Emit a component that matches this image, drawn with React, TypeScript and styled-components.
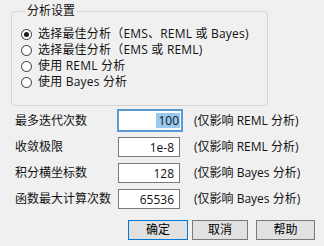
import React from "react";
import styled, { createGlobalStyle } from "styled-components";

const GlobalStyle = createGlobalStyle`
  html, body {
    margin: 0;
    padding: 0;
    background: #f0f0f0;
  }
  body {
    font-family: "Open Sans", "Noto Sans CJK SC", sans-serif;
    font-size: 12px;
    color: #111;
  }
`;

const Dialog = styled.div`
  width: 324px;
  height: 246px;
  box-sizing: border-box;
  padding: 3px 9px 0 11px;
  display: flex;
  flex-direction: column;
`;

const Group = styled.fieldset`
  margin: 0;
  width: 257px;
  box-sizing: border-box;
  border: 1px solid #d5d5d5;
  border-radius: 3px;
  padding: 7px 9px 15px 9px;
  display: flex;
  flex-direction: column;
`;

const Legend = styled.legend`
  padding: 0 2px;
  margin-left: 4px;
  line-height: 16px;
  height: 16px;
`;

const RadioRow = styled.label`
  display: flex;
  align-items: center;
  gap: 6px;
  height: 16px;
  flex: none;
  line-height: 16px;
  white-space: nowrap;
  letter-spacing: 0.2px;
`;

const RadioCircle = styled.span<{ $checked?: boolean }>`
  width: 11px;
  height: 11px;
  box-sizing: border-box;
  border: 1px solid #333;
  border-radius: 50%;
  background: #fff;
  display: flex;
  align-items: center;
  justify-content: center;
  flex: none;
  &::after {
    content: "";
    width: 5px;
    height: 5px;
    border-radius: 50%;
    background: ${(p) => (p.$checked ? "#1a1a1a" : "transparent")};
  }
`;

const Fields = styled.div`
  display: grid;
  grid-template-columns: 103px 62px auto;
  grid-auto-rows: 20px;
  row-gap: 6px;
  margin-top: 5px;
  margin-left: 4px;
  align-items: center;
`;

const FieldLabel = styled.span`
  line-height: 16px;
  white-space: nowrap;
`;

const TextBox = styled.div<{ $focused?: boolean }>`
  box-sizing: border-box;
  background: #fff;
  display: flex;
  align-items: center;
  justify-content: flex-end;
  line-height: 15px;
  border: ${(p) => (p.$focused ? "2px solid #5b9bd5" : "1px solid #7a7a7a")};
  width: ${(p) => (p.$focused ? "66px" : "62px")};
  height: ${(p) => (p.$focused ? "23px" : "20px")};
  margin-left: ${(p) => (p.$focused ? "-1px" : "0")};
  margin-top: ${(p) => (p.$focused ? "-1px" : "0")};
  padding-right: ${(p) => (p.$focused ? "1px" : "5px")};
`;

const Selected = styled.span`
  background: #99c9ef;
  padding: 0 1px 0 2px;
`;

const Note = styled.span`
  white-space: nowrap;
  line-height: 16px;
  margin-left: 14px;
`;

const ButtonBar = styled.div`
  display: flex;
  justify-content: flex-end;
  gap: 4px;
  margin-top: 11px;
`;

const Button = styled.button<{ $primary?: boolean; $w: number }>`
  font: inherit;
  color: #000;
  width: ${(p) => p.$w}px;
  height: 20px;
  padding: 0;
  background: #e1e1e1;
  border: 1px solid ${(p) => (p.$primary ? "#0078d7" : "#7a7a7a")};
  line-height: 16px;
  &:last-child {
    margin-left: 4px;
  }
`;

const options = [
  "选择最佳分析（EMS、REML 或 Bayes)",
  "选择最佳分析（EMS 或 REML)",
  "使用 REML 分析",
  "使用 Bayes 分析",
];

const fields = [
  { label: "最多迭代次数", value: "100", note: "(仅影响 REML 分析)", focused: true },
  { label: "收敛极限", value: "1e-8", note: "(仅影响 REML 分析)" },
  { label: "积分横坐标数", value: "128", note: "(仅影响 Bayes 分析)" },
  { label: "函数最大计算次数", value: "65536", note: "(仅影响 Bayes 分析)" },
];

export default function App() {
  return (
    <>
      <GlobalStyle />
      <Dialog>
        <Group>
          <Legend>分析设置</Legend>
          {options.map((o, i) => (
            <RadioRow key={o}>
              <RadioCircle $checked={i === 0} />
              {o}
            </RadioRow>
          ))}
        </Group>
        <Fields>
          {fields.map((f) => (
            <React.Fragment key={f.label}>
              <FieldLabel>{f.label}</FieldLabel>
              <TextBox $focused={f.focused}>
                {f.focused ? <Selected>{f.value}</Selected> : f.value}
              </TextBox>
              <Note>{f.note}</Note>
            </React.Fragment>
          ))}
        </Fields>
        <ButtonBar>
          <Button $primary $w={60}>确定</Button>
          <Button $w={56}>取消</Button>
          <Button $w={59}>帮助</Button>
        </ButtonBar>
      </Dialog>
    </>
  );
}
